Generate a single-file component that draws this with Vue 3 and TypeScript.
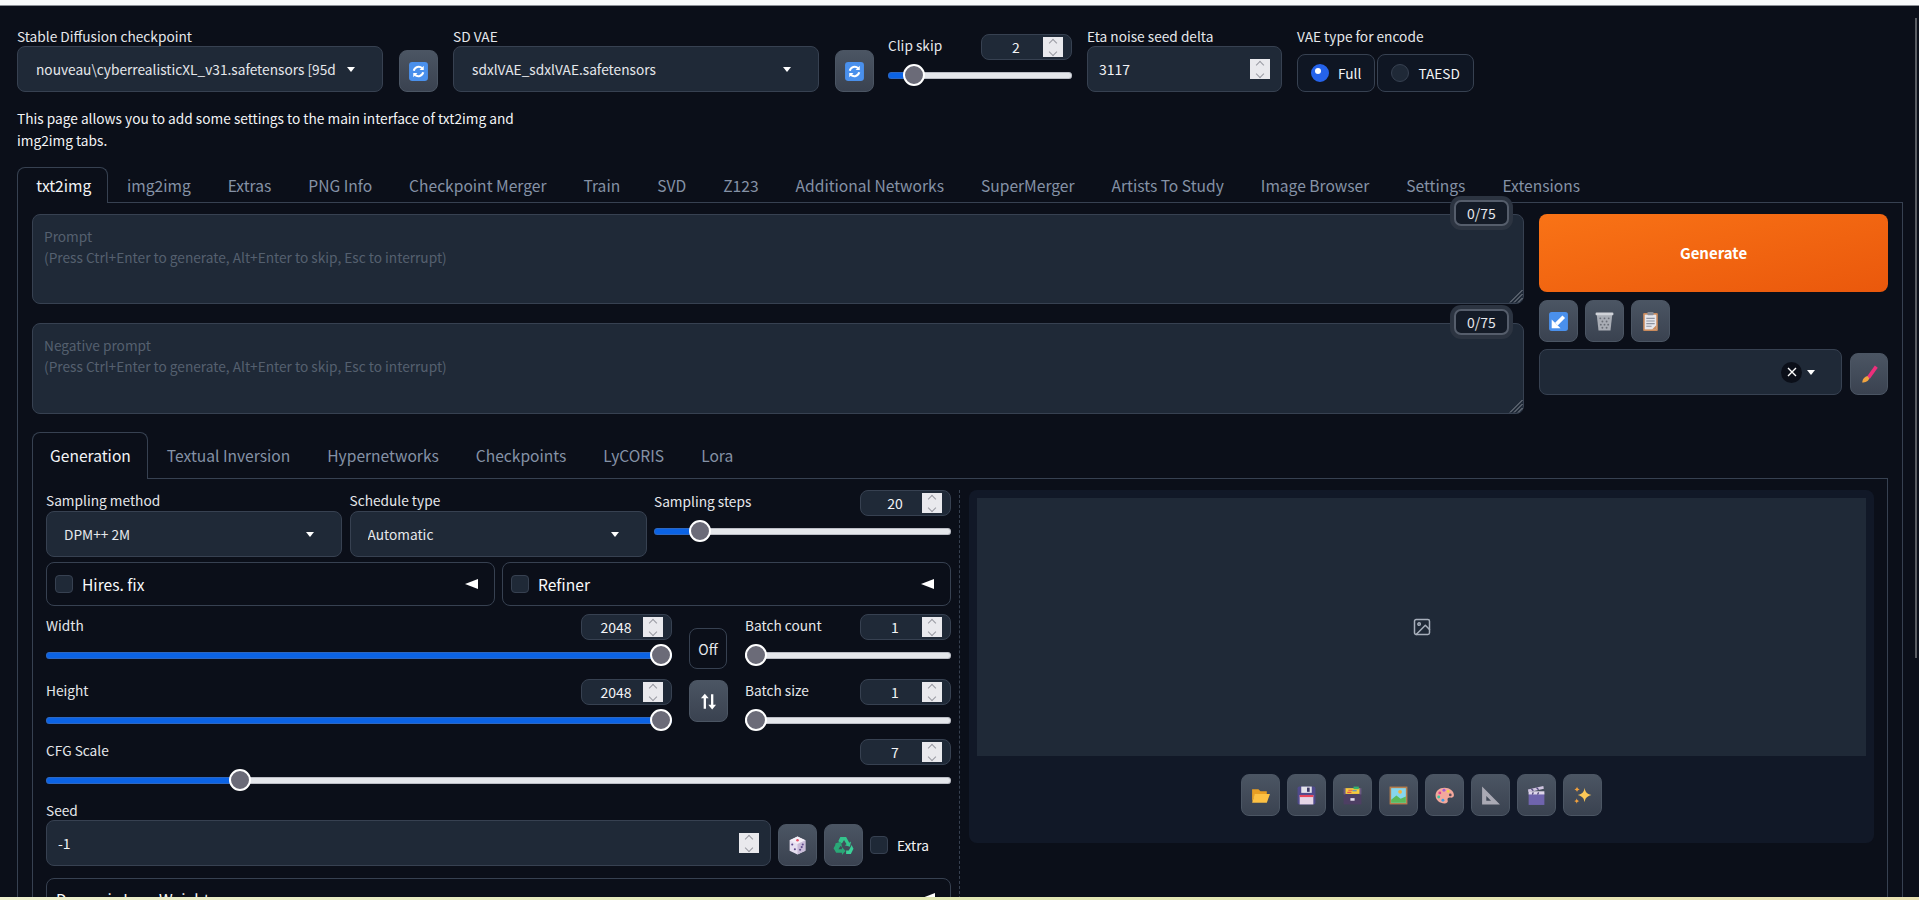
<script setup lang="ts">
import { reactive } from 'vue'

const mainTabs: string[] = ['txt2img', 'img2img', 'Extras', 'PNG Info', 'Checkpoint Merger', 'Train', 'SVD', 'Z123', 'Additional Networks', 'SuperMerger', 'Artists To Study', 'Image Browser', 'Settings', 'Extensions']
const subTabs: string[] = ['Generation', 'Textual Inversion', 'Hypernetworks', 'Checkpoints', 'LyCORIS', 'Lora']
const placeholderPrompt = 'Prompt\n(Press Ctrl+Enter to generate, Alt+Enter to skip, Esc to interrupt)'
const placeholderNegative = 'Negative prompt\n(Press Ctrl+Enter to generate, Alt+Enter to skip, Esc to interrupt)'

const vals = reactive({ clip: 2, steps: 20, width: 2048, height: 2048, count: 1, size: 1, cfg: 7 })

function pct(v: number, min: number, max: number): Record<string, string> {
  return { '--p': ((v - min) / (max - min)) * 100 + '%' }
}
</script>

<template>
  <div class="page">
    <div class="topbar"></div>
    <div class="scroll-thumb"></div>
    <main class="content">
      <section class="settings">
        <div class="field w-select">
          <label class="lbl">Stable Diffusion checkpoint</label>
          <div class="select">
            <span class="select-text">nouveau\cyberrealisticXL_v31.safetensors [95d</span>
            <i class="caret"></i>
          </div>
        </div>
        <button class="btn icon-btn refresh-a">
          <svg viewBox="0 0 20 20" class="ico"><rect x="1" y="1" width="18" height="18" rx="3" fill="#4a90ec"/><path d="M5.500 9.200a4.800 4.800 0 0 1 8-2.400M14.500 10.800a4.800 4.800 0 0 1-8 2.400" fill="none" stroke="#fff" stroke-width="2"/><path d="M15 4.500v4h-4zM5 15.500v-4h4z" fill="#fff"/></svg>
        </button>
        <div class="field w-select">
          <label class="lbl">SD VAE</label>
          <div class="select">
            <span class="select-text">sdxlVAE_sdxlVAE.safetensors</span>
            <i class="caret"></i>
          </div>
        </div>
        <button class="btn icon-btn refresh-b">
          <svg viewBox="0 0 20 20" class="ico"><rect x="1" y="1" width="18" height="18" rx="3" fill="#4a90ec"/><path d="M5.500 9.200a4.800 4.800 0 0 1 8-2.400M14.500 10.800a4.800 4.800 0 0 1-8 2.400" fill="none" stroke="#fff" stroke-width="2"/><path d="M15 4.500v4h-4zM5 15.500v-4h4z" fill="#fff"/></svg>
        </button>
        <div class="slider clip">
          <div class="slider-head">
            <label class="lbl">Clip skip</label>
            <div class="num"><input class="num-input" :value="vals.clip" /><span class="spin"><i class="up"></i><i class="down"></i></span></div>
          </div>
          <input class="range" type="range" min="1" max="12" v-model.number="vals.clip" :style="pct(vals.clip, 1, 12)" />
        </div>
        <div class="field w-eta">
          <label class="lbl">Eta noise seed delta</label>
          <div class="bignum">
            <input class="big-input" value="3117" />
            <span class="spin"><i class="up"></i><i class="down"></i></span>
          </div>
        </div>
        <div class="field vae">
          <label class="lbl vae-lbl">VAE type for encode</label>
          <div class="radios">
            <label class="radio"><i class="dot on"></i>Full</label>
            <label class="radio"><i class="dot"></i>TAESD</label>
          </div>
        </div>
      </section>

      <p class="help">This page allows you to add some settings to the main interface of txt2img and<br />img2img tabs.</p>

      <nav class="tabs">
        <button v-for="(t, i) in mainTabs" :key="t" class="tab" :class="{ active: i === 0 }">{{ t }}</button>
      </nav>

      <section class="panel">
        <div class="prompt-row">
          <div class="prompts">
            <div class="prompt p1">
              <textarea class="ta" :placeholder="placeholderPrompt"></textarea>
              <svg class="grip" viewBox="0 0 14 14"><path d="M13.500 1 1 13.500M13.500 5 5 13.500M13.500 9 9 13.500" stroke="#8b919b" stroke-width="1"/></svg>
              <span class="badge">0/75</span>
            </div>
            <div class="prompt p2">
              <textarea class="ta" :placeholder="placeholderNegative"></textarea>
              <svg class="grip" viewBox="0 0 14 14"><path d="M13.500 1 1 13.500M13.500 5 5 13.500M13.500 9 9 13.500" stroke="#8b919b" stroke-width="1"/></svg>
              <span class="badge">0/75</span>
            </div>
          </div>
          <div class="actions">
            <button class="generate">Generate</button>
            <div class="tools">
              <button class="btn icon-btn">
                <svg viewBox="0 0 20 20" class="ico"><rect x="1" y="1" width="18" height="18" rx="2.500" fill="#4a90ec"/><path d="M15 5.500 8 12.500" stroke="#fff" stroke-width="3.500"/><path d="M3.500 8v8.500H12z" fill="#fff"/></svg>
              </button>
              <button class="btn icon-btn">
                <svg viewBox="0 0 20 20" class="ico"><path d="M2.500 2.500h15l-1.800 16H4.300z" fill="#a9adb5"/><rect x="1.500" y="1.500" width="17" height="2.500" rx="1" fill="#cfd2d8"/><g fill="#6b6f78"><circle cx="6" cy="7" r=".9"/><circle cx="10" cy="7" r=".9"/><circle cx="14" cy="7" r=".9"/><circle cx="8" cy="10" r=".9"/><circle cx="12" cy="10" r=".9"/><circle cx="6.500" cy="13" r=".9"/><circle cx="10" cy="13" r=".9"/><circle cx="13.500" cy="13" r=".9"/><circle cx="8" cy="16" r=".9"/><circle cx="12" cy="16" r=".9"/></g></svg>
              </button>
              <button class="btn icon-btn">
                <svg viewBox="0 0 20 20" class="ico"><rect x="3" y="2" width="14" height="17" rx="1" fill="#c98a5c"/><rect x="4.500" y="3.500" width="11" height="14" fill="#e6e6ec"/><path d="M15.500 13.500v4h-4z" fill="#c98a5c"/><rect x="7" y="1" width="6" height="3" rx=".8" fill="#8a8d96"/><path d="M6 7h8M6 9.500h8M6 12h8M6 14.500h5" stroke="#8d93a0" stroke-width="1"/></svg>
              </button>
            </div>
            <div class="styles">
              <div class="select style-select">
                <span class="clear"><svg viewBox="0 0 12 12" width="12" height="12"><path d="M2 2l8 8M10 2l-8 8" stroke="#fff" stroke-width="1.400"/></svg></span>
                <i class="caret"></i>
              </div>
              <button class="btn icon-btn paint">
                <svg viewBox="0 0 20 20" class="ico"><path d="M16.500 2.500 9 13" stroke="#ec2f7b" stroke-width="3.400"/><path d="M8 11.500c-2.500.5-4.500 2.500-5 6 3 0 6-1 6.800-4z" fill="#f0a440"/></svg>
              </button>
            </div>
          </div>
        </div>

        <nav class="tabs sub-tabs">
          <button v-for="(t, i) in subTabs" :key="t" class="tab sub" :class="{ active: i === 0 }">{{ t }}</button>
        </nav>

        <section class="sub-panel">
          <div class="controls">
            <div class="row-3">
              <div class="field">
                <label class="lbl">Sampling method</label>
                <div class="select"><span class="select-text">DPM++ 2M</span><i class="caret"></i></div>
              </div>
              <div class="field">
                <label class="lbl">Schedule type</label>
                <div class="select"><span class="select-text">Automatic</span><i class="caret"></i></div>
              </div>
              <div class="slider">
                <div class="slider-head">
                  <label class="lbl">Sampling steps</label>
                  <div class="num"><input class="num-input" :value="vals.steps" /><span class="spin"><i class="up"></i><i class="down"></i></span></div>
                </div>
                <input class="range" type="range" min="1" max="150" v-model.number="vals.steps" :style="pct(vals.steps, 1, 150)" />
              </div>
            </div>

            <div class="row-2">
              <div class="acc"><i class="check"></i><span class="acc-label">Hires. fix</span><i class="tri"></i></div>
              <div class="acc"><i class="check"></i><span class="acc-label">Refiner</span><i class="tri"></i></div>
            </div>

            <div class="dims">
              <div class="dims-left">
                <div class="slider">
                  <div class="slider-head">
                    <label class="lbl">Width</label>
                    <div class="num"><input class="num-input" :value="vals.width" /><span class="spin"><i class="up"></i><i class="down"></i></span></div>
                  </div>
                  <input class="range" type="range" min="64" max="2048" v-model.number="vals.width" :style="pct(vals.width, 64, 2048)" />
                </div>
                <div class="slider">
                  <div class="slider-head">
                    <label class="lbl">Height</label>
                    <div class="num"><input class="num-input" :value="vals.height" /><span class="spin"><i class="up"></i><i class="down"></i></span></div>
                  </div>
                  <input class="range" type="range" min="64" max="2048" v-model.number="vals.height" :style="pct(vals.height, 64, 2048)" />
                </div>
              </div>
              <div class="dims-mid">
                <button class="off">Off</button>
                <button class="btn icon-btn swap">
                  <svg viewBox="0 0 20 20" class="ico"><path d="M6.500 17V5M13.500 3v12" stroke="#fff" stroke-width="2.200"/><path d="M2.800 7 6.500 2.500 10.200 7zM9.800 13l3.700 4.500 3.700-4.500z" fill="#fff"/></svg>
                </button>
              </div>
              <div class="dims-right">
                <div class="slider">
                  <div class="slider-head">
                    <label class="lbl">Batch count</label>
                    <div class="num"><input class="num-input" :value="vals.count" /><span class="spin"><i class="up"></i><i class="down"></i></span></div>
                  </div>
                  <input class="range" type="range" min="1" max="100" v-model.number="vals.count" :style="pct(vals.count, 1, 100)" />
                </div>
                <div class="slider">
                  <div class="slider-head">
                    <label class="lbl">Batch size</label>
                    <div class="num"><input class="num-input" :value="vals.size" /><span class="spin"><i class="up"></i><i class="down"></i></span></div>
                  </div>
                  <input class="range" type="range" min="1" max="8" v-model.number="vals.size" :style="pct(vals.size, 1, 8)" />
                </div>
              </div>
            </div>

            <div class="slider cfg">
              <div class="slider-head">
                <label class="lbl">CFG Scale</label>
                <div class="num"><input class="num-input" :value="vals.cfg" /><span class="spin"><i class="up"></i><i class="down"></i></span></div>
              </div>
              <input class="range" type="range" min="1" max="30" v-model.number="vals.cfg" :style="pct(vals.cfg, 1, 30)" />
            </div>

            <div class="seed-row">
              <div class="field seed">
                <label class="lbl">Seed</label>
                <div class="bignum">
                  <input class="big-input" value="-1" />
                  <span class="spin"><i class="up"></i><i class="down"></i></span>
                </div>
              </div>
              <button class="btn icon-btn">
                <svg viewBox="0 0 20 20" class="ico"><path d="M10 1.500 17.500 5v10L10 18.500 2.500 15V5z" fill="#e6dff0"/><path d="M10 8.500 2.500 5 10 1.500 17.500 5z" fill="#f3eef6"/><path d="M10 8.500v10l7.500-3.500V5z" fill="#c9bcd8"/><circle cx="10" cy="5" r="1.200" fill="#e8526a"/><g fill="#5f4b8b"><circle cx="5" cy="9" r="1"/><circle cx="7.500" cy="13.500" r="1"/><circle cx="12.500" cy="14" r="1"/><circle cx="15" cy="9" r="1"/><circle cx="14" cy="11.500" r="1"/></g></svg>
              </button>
              <button class="btn icon-btn">
                <svg viewBox="0 0 20 20" class="ico"><path d="M7 2h5.500l3 5.300 1.700-1-1 5-5-1.500 1.700-1-2.400-4-2 3.200L5 6z" fill="#34c48c"/><path d="M2 11.500l-1.500 2.500L3 18.500h5.500v2l3.500-3.800-3.500-3.700v2H5.200L7 12l1.700 1-1.200-5-5 1.300z" fill="#2aa877" transform="translate(0 -1.500)"/><path d="M19.500 13 17 18h-4.500v-3.200H15l1.200-2.300 1.500-3z" fill="#3ad098"/></svg>
              </button>
              <label class="extra"><i class="check"></i>Extra</label>
            </div>

            <div class="acc bottom-acc"><span class="acc-label small">Dynamic Lora Weights</span><i class="tri"></i></div>
          </div>

          <aside class="results">
            <div class="gallery">
              <svg viewBox="0 0 24 24" width="20" height="20" fill="none" stroke="#a7afbb" stroke-width="1.800" stroke-linecap="round" stroke-linejoin="round"><rect x="3" y="3" width="18" height="18" rx="2"/><circle cx="8.500" cy="8.500" r="1.500"/><path d="M21 15l-5-5L5 21"/></svg>
            </div>
            <div class="result-tools">
              <button class="btn icon-btn">
                <svg viewBox="0 0 20 20" class="ico"><path d="M2 4h6l2 2h6v3H5L2 16z" fill="#e89f24"/><path d="M4.500 8.500H19L16 17H2z" fill="#fdc143"/></svg>
              </button>
              <button class="btn icon-btn">
                <svg viewBox="0 0 20 20" class="ico"><rect x="1.500" y="1.500" width="17" height="17" rx="1.500" fill="#4f4a8c"/><rect x="5" y="1.500" width="10" height="6" fill="#e3e3ea"/><rect x="10.500" y="2.500" width="2.500" height="4" fill="#3d3a66"/><rect x="3.500" y="9.500" width="13" height="9" fill="#e5d6e6"/><rect x="3.500" y="9.500" width="13" height="2" fill="#e8475c"/></svg>
              </button>
              <button class="btn icon-btn">
                <svg viewBox="0 0 20 20" class="ico"><rect x="3" y="3" width="14" height="6" fill="#f7cc3d"/><rect x="11" y="1.500" width="5" height="2.500" fill="#35b36f"/><path d="M6 5h4M5 7h4" stroke="#e85050" stroke-width="1"/><path d="M10 5.500h4" stroke="#3f8be0" stroke-width="1"/><rect x="1.500" y="8.500" width="17" height="10" fill="#4d3f63"/><rect x="1.500" y="3" width="1.800" height="6" fill="#6b5a82"/><rect x="16.700" y="3" width="1.800" height="6" fill="#6b5a82"/><rect x="8" y="12.500" width="4" height="2.500" fill="#e3dcec"/></svg>
              </button>
              <button class="btn icon-btn">
                <svg viewBox="0 0 20 20" class="ico"><rect x="1.500" y="1.500" width="17" height="17" fill="#b67f4d"/><rect x="3" y="3" width="14" height="14" fill="#86d6ee"/><circle cx="11.500" cy="6.500" r="1.800" fill="#f5b53b"/><path d="M3 14l5-4 4 3 5-2v6H3z" fill="#5cbb5a"/></svg>
              </button>
              <button class="btn icon-btn">
                <svg viewBox="0 0 20 20" class="ico"><path d="M10 2.500c5 0 9 3.200 9 7 0 2.200-1.800 2.800-3.500 2.500-2-.3-3 1-2.500 2.500.6 2-.8 3-3 3-4.500 0-8.500-3-8.500-7.500S5 2.500 10 2.500z" fill="#f4a89c"/><circle cx="5.500" cy="7.500" r="1.400" fill="#e0458f"/><circle cx="9.500" cy="5" r="1.400" fill="#a35ed6"/><circle cx="13.500" cy="6" r="1.300" fill="#f4d24a"/><circle cx="4.500" cy="11.500" r="1.400" fill="#3fc4a0"/><circle cx="8.500" cy="14.500" r="1.400" fill="#3f9fe0"/><circle cx="15.500" cy="9.500" r="1.300" fill="#5a4d5a"/></svg>
              </button>
              <button class="btn icon-btn">
                <svg viewBox="0 0 20 20" class="ico"><path fill-rule="evenodd" d="M2 1.500 19 18.500H2zM6 10.500v4.500h4.500z" fill="#a9a9b4"/></svg>
              </button>
              <button class="btn icon-btn">
                <svg viewBox="0 0 20 20" class="ico"><rect x="2.500" y="8" width="15" height="11" fill="#6f64ad"/><rect x="2.500" y="6" width="15" height="3" fill="#ded6ea"/><path d="M1.800 4.200 16.500 1l.5 2.500L2.400 6.800z" fill="#cfc4e0"/><path d="M5 3.500l2 2M10 2.500l2 2M7 7l-1 2M12 7l-1 2" stroke="#4d4478" stroke-width="1.200"/></svg>
              </button>
              <button class="btn icon-btn">
                <svg viewBox="0 0 20 20" class="ico"><path d="M12 2.500c.6 4 1.800 5.500 6.500 7-4.700 1.500-5.900 3-6.500 7-.6-4-1.800-5.500-6.500-7 4.700-1.500 5.900-3 6.500-7z" fill="#fcc857"/><path d="M4.800 1.500c.2 1.500.8 2.200 2.500 2.700-1.700.5-2.300 1.200-2.500 2.700-.2-1.500-.8-2.200-2.500-2.700 1.700-.5 2.300-1.200 2.500-2.700z" fill="#f3a13c"/><path d="M4.500 12.500c.2 1.500.8 2.200 2.500 2.700-1.700.5-2.300 1.200-2.500 2.700-.2-1.500-.8-2.200-2.500-2.700 1.700-.5 2.300-1.200 2.500-2.700z" fill="#f3a13c"/></svg>
              </button>
            </div>
          </aside>
        </section>
      </section>
    </main>
    <div class="strip"></div>
  </div>
</template>

<style>
html, body { margin: 0; background: #0b0f19; overflow: hidden; }
</style>

<style scoped>
.page {
  position: relative;
  height: 900px;
  display: flex;
  flex-direction: column;
  background: #0b0f19;
  color: #f3f4f6;
  font-family: "Noto Sans CJK SC", "Source Sans Pro", "Noto Sans", sans-serif;
  font-size: 13.7px;
  line-height: 20px;
  overflow: hidden;
}
.topbar { flex: none; height: 5px; background: #f9fafb; border-bottom: 1px solid #8b8f96; }
.scroll-thumb { position: absolute; right: 2px; top: 18px; width: 2px; height: 640px; background: #5a5d63; }
.content { flex: 1; min-height: 0; overflow: hidden; padding: 0 16px 0 17px; }
.strip { flex: none; height: 3px; background: linear-gradient(90deg, #eef0cf, #e2e8b4 50%, #e9e2b2); }

button { font: inherit; color: inherit; cursor: pointer; margin: 0; }
input { font: inherit; color: inherit; border: 0; outline: 0; background: transparent; margin: 0; padding: 0; }
i { display: block; font-style: normal; flex: none; }

.settings { display: flex; align-items: flex-end; padding-top: 20px; }
.field { display: flex; flex-direction: column; min-width: 0; }
.w-select { width: 366px; flex: none; }
.lbl { color: #e5e7eb; font-size: 13.7px; line-height: 20px; white-space: nowrap; }
.select {
  display: flex; align-items: center; height: 46px; box-sizing: border-box;
  background: #1f2937; border: 1px solid #374151; border-radius: 8px;
  padding: 0 27px 0 18px;
}
.select-text { flex: 1; min-width: 0; overflow: hidden; white-space: nowrap; color: #e5e7eb; }
.caret { flex: none; width: 0; height: 0; margin-left: 11px; border-left: 4px solid transparent; border-right: 4px solid transparent; border-top: 5px solid #fff; }

.btn {
  display: flex; align-items: center; justify-content: center; box-sizing: border-box; padding: 0;
  background: linear-gradient(to bottom, #4b5563, #3a4250); border: 1px solid #4b5563; border-radius: 8px;
}
.icon-btn { width: 39px; height: 42px; flex: none; }
.ico { width: 21px; height: 21px; display: block; }
.refresh-a { margin: 0 15px 0 16px; }
.refresh-b { margin: 0 14px 0 16px; }

.slider { display: flex; flex-direction: column; min-width: 0; }
.slider-head { display: flex; align-items: flex-start; justify-content: space-between; height: 26px; }
.slider-head .lbl { margin-top: 1px; }
.clip { width: 184px; flex: none; margin-bottom: 6px; }
.num {
  display: flex; align-items: center; width: 91px; height: 26px; box-sizing: border-box; flex: none;
  background: #1f2937; border: 1px solid #374151; border-radius: 8px; padding: 0 8px 0 7px;
}
.num-input { flex: 1; min-width: 0; width: 0; text-align: center; font-size: 14px; color: #f3f4f6; }
.spin {
  display: flex; flex-direction: column; align-items: center; justify-content: center; gap: 3px;
  flex: none; width: 20px; height: 20px; background: #e9e9ed;
}
.spin i { width: 6px; height: 6px; border-left: 1px solid #9a9ba3; border-top: 1px solid #9a9ba3; box-sizing: border-box; }
.spin .up { transform: rotate(45deg); margin-top: 3px; }
.spin .down { transform: rotate(225deg); margin-bottom: 3px; }

.range {
  -webkit-appearance: none; appearance: none; display: block; width: 100%; height: 22px; margin: 4px 0 0; background: transparent;
}
.range::-webkit-slider-runnable-track {
  height: 7px; border-radius: 3.500px;
  background: linear-gradient(to right, #0b63e5 var(--p), #e5e7eb var(--p));
  box-shadow: inset 0 0 0 1px rgba(110, 112, 125, 0.35);
}
.range::-webkit-slider-thumb {
  -webkit-appearance: none; appearance: none; box-sizing: border-box;
  width: 22px; height: 22px; margin-top: -7.500px; border-radius: 50%;
  background: #6b6b78; border: 2px solid #fff;
}

.w-eta { width: 195px; flex: none; margin-left: 15px; }
.bignum {
  display: flex; align-items: center; height: 46px; box-sizing: border-box;
  background: #1f2937; border: 1px solid #374151; border-radius: 8px; padding: 0 11px;
}
.big-input { flex: 1; min-width: 0; font-size: 14px; color: #f3f4f6; }
.vae { margin-left: 15px; }
.vae-lbl { margin-bottom: 8px; }
.radios { display: flex; gap: 2px; }
.radio {
  display: flex; align-items: center; gap: 9px; height: 38px; box-sizing: border-box; padding: 0 13px;
  border: 1px solid #374151; border-radius: 8px; background: #0f1623; color: #f3f4f6;
}
.dot { width: 18px; height: 18px; box-sizing: border-box; border-radius: 50%; background: #1f2937; border: 1px solid #374151; }
.dot.on { background: #2563eb; border: 5px solid #2563eb; }
.dot.on::after { content: ""; display: block; width: 6px; height: 6px; margin: -1px; border-radius: 50%; background: #fff; }

.help { margin: 15px 0 16px; font-size: 13.7px; line-height: 22px; color: #f3f4f6; }

.tabs { display: flex; height: 36px; box-sizing: border-box; border-bottom: 1px solid #374151; }
.tab {
  height: 36px; padding: 0 17.500px 2px; background: transparent; border: 1px solid transparent; border-bottom: 0;
  font-size: 15.600px; color: #8592a6; white-space: nowrap; box-sizing: border-box;
}
.tab.active { padding: 0 16.200px 2px 18.300px; color: #f3f4f6; background: #0b0f19; border-color: #374151; border-radius: 8px 8px 0 0; }

.panel { border: 1px solid #374151; border-top: 0; padding: 11px 14px 0; height: 720px; box-sizing: border-box; }
.prompt-row { display: flex; gap: 15px; }
.prompts { flex: 1; min-width: 0; display: flex; flex-direction: column; gap: 19px; }
.prompt { position: relative; }
.p1 { height: 90px; }
.p2 { height: 91px; }
.ta {
  display: block; width: 100%; height: 100%; box-sizing: border-box; resize: none;
  background: #1f2937; border: 1px solid #374151; border-radius: 8px; padding: 11px;
  font: inherit; font-size: 13.7px; line-height: 21px; color: #f3f4f6; outline: 0;
}
.ta::placeholder { color: #55606f; opacity: 1; }
.grip { position: absolute; right: 1px; bottom: 1px; width: 14px; height: 14px; }
.badge {
  position: absolute; right: 15px; top: -14px; width: 55px; height: 26px; box-sizing: border-box;
  display: flex; align-items: center; justify-content: center;
  background: #141b27; border: 2px solid #555d6b; border-radius: 7px; color: #e5e7eb; font-size: 14px;
  box-shadow: 0 0 0 4px #2c3441;
}

.actions { flex: none; width: 349px; display: flex; flex-direction: column; }
.generate {
  height: 78px; border: 0; border-radius: 8px; background: linear-gradient(to bottom right, #f97316, #ea580c);
  color: #fff; font-size: 15px; font-weight: 700;
}
.tools { display: flex; gap: 7px; margin-top: 8px; }
.styles { display: flex; align-items: flex-end; gap: 8px; margin-top: 7px; }
.style-select { flex: 1; justify-content: flex-end; padding-right: 26px; }
.style-select .caret { margin-left: 5px; }
.clear { display: flex; align-items: center; justify-content: center; width: 21px; height: 21px; border-radius: 50%; background: #0b0f19; }
.paint { width: 38px; }

.sub-tabs { height: 47px; margin-top: 18px; }
.sub-tabs .tab { height: 47px; }
.sub-tabs .tab.active { padding: 0 16.500px 2px 17px; }

.sub-panel { display: flex; border: 1px solid #374151; border-top: 0; border-bottom: 0; padding: 11px 13px 0; height: 420px; box-sizing: border-box; }
.controls { flex: none; width: 914px; box-sizing: border-box; padding-right: 8px; border-right: 1px dashed #374151; }
.results { flex: 1; min-width: 0; margin-left: 9px; height: 353px; box-sizing: border-box; background: #111827; border-radius: 8px; padding: 8px; display: flex; flex-direction: column; }
.gallery { height: 258px; background: #1f2937; display: flex; align-items: center; justify-content: center; }
.result-tools { display: flex; justify-content: center; gap: 7px; margin-top: 18px; }

.row-3 { display: grid; grid-template-columns: 296px 297px 297px; gap: 7.500px; height: 67px; align-items: stretch; }
.row-3 .select { margin-top: 1px; padding-left: 17px; }
.row-2 { display: grid; grid-template-columns: 1fr 1fr; gap: 7px; margin-top: 5px; }
.acc { display: flex; align-items: center; height: 44px; box-sizing: border-box; border: 1px solid #374151; border-radius: 8px; padding: 0 16px 0 8px; }
.check { width: 18px; height: 18px; box-sizing: border-box; background: #1f2937; border: 1px solid #374151; border-radius: 4px; flex: none; }
.acc-label { flex: 1; margin-left: 9px; font-size: 15.600px; color: #f9fafb; }
.tri { width: 0; height: 0; border-top: 5.500px solid transparent; border-bottom: 5.500px solid transparent; border-right: 13px solid #fff; }

.dims { display: flex; margin-top: 8px; }
.dims-left { flex: none; width: 626px; display: flex; flex-direction: column; gap: 13px; }
.dims-mid { flex: none; width: 39px; margin-left: 17px; display: flex; flex-direction: column; padding-top: 14px; }
.off { width: 38px; height: 41px; padding: 0; box-sizing: border-box; background: #0b0f19; border: 1px solid #374151; border-radius: 8px; color: #e5e7eb; font-size: 14px; }
.swap { margin-top: 11px; }
.dims-right { flex: none; width: 206px; margin-left: 17px; display: flex; flex-direction: column; gap: 13px; }

.cfg { margin-top: 8px; }
.seed-row { display: flex; align-items: flex-end; gap: 7px; margin-top: 9px; }
.seed { width: 725px; flex: none; }
.extra { display: flex; align-items: center; gap: 9px; height: 42px; color: #f3f4f6; font-size: 13.7px; }
.bottom-acc { margin-top: 12px; height: 60px; align-items: flex-start; padding: 8px 15px 0 9px; }
.small { margin-left: 0; line-height: 24px; }
.bottom-acc .tri { margin-top: 6px; }
</style>
